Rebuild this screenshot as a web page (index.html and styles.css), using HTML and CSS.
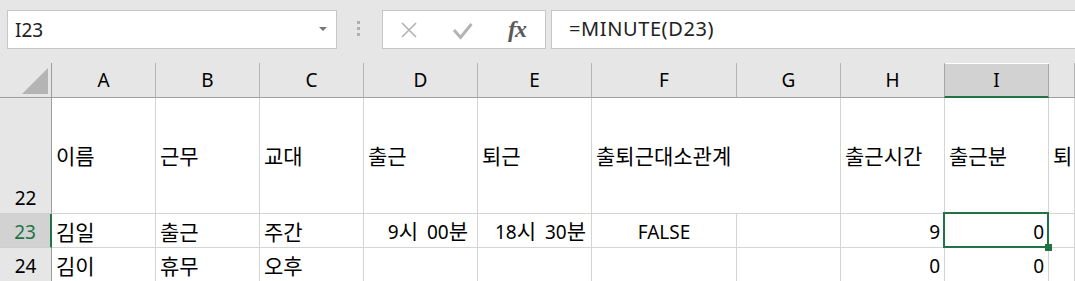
FILE: index.html
```html
<!DOCTYPE html>
<html lang="ko">
<head>
    <meta charset="UTF-8">
    <title>출퇴근 기록</title>
    <link rel="stylesheet" href="styles.css">
</head>
<body>
    <div class="toolbar">
        <div class="namebox">
            <span>I23</span>
            <span class="caret"></span>
        </div>
        <div class="grip"><i></i><i></i><i></i></div>
        <div class="fx-buttons">
            <svg class="icon-cancel" width="16" height="16" viewBox="0 0 16 16">
                <path d="M1 1 L15 15 M15 1 L1 15" stroke="#b4b4b4" stroke-width="1.7" fill="none"/>
            </svg>
            <svg class="icon-enter" width="21" height="18" viewBox="0 0 21 18">
                <polyline points="2,8 8.5,15.5 19.5,2" stroke="#b4b4b4" stroke-width="3" fill="none"/>
            </svg>
            <span class="fx">fx</span>
        </div>
        <div class="formula">=MINUTE(D23)</div>
    </div>

    <div class="sheet">
        <!-- column headers -->
        <div class="corner">
            <svg width="26" height="26" viewBox="0 0 26 26"><polygon points="26,0 26,26 0,26" fill="#b4b4b4"/></svg>
        </div>
        <div class="hd">A</div>
        <div class="hd">B</div>
        <div class="hd">C</div>
        <div class="hd">D</div>
        <div class="hd">E</div>
        <div class="hd">F</div>
        <div class="hd">G</div>
        <div class="hd">H</div>
        <div class="hd active">I</div>
        <div class="hd"></div>

        <!-- row 22 -->
        <div class="rh">22</div>
        <div class="cell title ko">이름</div>
        <div class="cell title ko">근무</div>
        <div class="cell title ko">교대</div>
        <div class="cell title ko">출근</div>
        <div class="cell title ko">퇴근</div>
        <div class="cell title ko spill">출퇴근대소관계</div>
        <div class="cell title"></div>
        <div class="cell title ko">출근시간</div>
        <div class="cell title ko">출근분</div>
        <div class="cell title ko">퇴</div>

        <!-- row 23 -->
        <div class="rh active">23</div>
        <div class="cell ko">김일</div>
        <div class="cell ko">출근</div>
        <div class="cell ko">주간</div>
        <div class="cell num time pad-d"><span>9<span class="ko">시</span> 00<span class="ko">분</span></span></div>
        <div class="cell num time"><span>18<span class="ko">시</span> 30<span class="ko">분</span></span></div>
        <div class="cell center">FALSE</div>
        <div class="cell"></div>
        <div class="cell num">9</div>
        <div class="cell num selected">0</div>
        <div class="cell"></div>

        <!-- row 24 -->
        <div class="rh">24</div>
        <div class="cell ko">김이</div>
        <div class="cell ko">휴무</div>
        <div class="cell ko">오후</div>
        <div class="cell"></div>
        <div class="cell"></div>
        <div class="cell"></div>
        <div class="cell"></div>
        <div class="cell num">0</div>
        <div class="cell num">0</div>
        <div class="cell"></div>
    </div>
</body>
</html>
```

FILE: styles.css
```css
body {
    margin: 0;
    background-color: #fff;
    overflow: hidden;
    font-family: "Noto Sans", "Noto Sans CJK KR", sans-serif;
    color: #000;
}
.toolbar {
    display: flex;
    align-items: flex-start;
    height: 63px;
    box-sizing: border-box;
    padding: 10px 0 0 7px;
    background-color: #e6e6e6;
}
.namebox {
    width: 330px;
    height: 39px;
    box-sizing: border-box;
    border: 1px solid #c6c6c6;
    background-color: #fff;
    display: flex;
    align-items: center;
    justify-content: space-between;
    padding: 0 9px 0 7px;
    font-size: 19px;
    color: #222;
}
.caret {
    border-left: 4px solid transparent;
    border-right: 4px solid transparent;
    border-top: 4px solid #777;
    margin-top: -2px;
}
.grip {
    display: flex;
    flex-direction: column;
    gap: 3px;
    margin: 11px 22px 0 20px;
}
.grip i {
    display: block;
    width: 3px;
    height: 3px;
    background-color: #b0b0b0;
}
.fx-buttons {
    width: 164px;
    height: 39px;
    box-sizing: border-box;
    border: 1px solid #c6c6c6;
    background-color: #fff;
    display: flex;
    align-items: center;
}
.icon-cancel {
    margin-left: 18px;
}
.icon-enter {
    margin-left: 35px;
    margin-top: 2px;
}
.fx {
    margin-left: 35px;
    font-family: "Liberation Serif", serif;
    font-style: italic;
    font-weight: bold;
    font-size: 24px;
    color: #5a5a5a;
    letter-spacing: -1px;
}
.formula {
    flex: 1;
    height: 39px;
    box-sizing: border-box;
    margin: 0 -2px 0 5px;
    border: 1px solid #c6c6c6;
    background-color: #fff;
    padding-left: 17px;
    font-size: 20px;
    letter-spacing: 0.6px;
    line-height: 36px;
    color: #222;
}
.sheet {
    display: grid;
    grid-template-columns: 52px 104px 104px 104px 114px 114px 145px 104px 104px 104px 1fr;
    grid-template-rows: 35px 116px 34px 34px;
    font-size: 19px;
}
.corner {
    background-color: #e6e6e6;
    border-right: 1px solid #9e9e9e;
    border-bottom: 1px solid #9e9e9e;
    display: flex;
    align-items: flex-end;
    justify-content: flex-end;
    padding: 0 3px 3px 0;
}
.corner svg {
    display: block;
}
.hd {
    background-color: #e6e6e6;
    border-right: 1px solid #b4b4b4;
    border-bottom: 1px solid #9e9e9e;
    display: flex;
    align-items: center;
    justify-content: center;
}
.hd.active {
    background-color: #d2d2d2;
    border-right-color: #a8a8a8;
    border-bottom: 2px solid #217346;
    margin-top: 1px;
    margin-left: -1px;
    border-left: 1px solid #a8a8a8;
}
.rh {
    background-color: #e6e6e6;
    border-right: 1px solid #9e9e9e;
    border-bottom: 1px solid #cfcfcf;
    display: flex;
    align-items: flex-end;
    justify-content: center;
    padding-bottom: 3px;
    line-height: 24px;
}
.rh.active {
    background-color: #d2d2d2;
    border-right: 2px solid #217346;
    color: #217346;
}
.cell {
    position: relative;
    border-right: 1px solid #d4d4d4;
    border-bottom: 1px solid #d4d4d4;
    display: flex;
    align-items: flex-end;
    padding: 0 4px 3px;
    line-height: 24px;
    white-space: nowrap;
    min-width: 0;
}
.ko {
    font-size: 21px;
}
.cell.title {
    align-items: center;
    padding-bottom: 0;
}
.cell.spill {
    border-right: none;
    z-index: 1;
}
.num {
    justify-content: flex-end;
}
.time {
    word-spacing: 4px;
    padding-right: 5px;
}
.time.pad-d {
    padding-right: 9px;
}
.center {
    justify-content: center;
}
.selected::after {
    content: "";
    position: absolute;
    left: -2px;
    top: -2px;
    right: -1px;
    bottom: -1px;
    border: 2px solid #217346;
    z-index: 2;
}
.selected::before {
    content: "";
    position: absolute;
    right: -4px;
    bottom: -4px;
    width: 7px;
    height: 7px;
    background-color: #217346;
    z-index: 3;
}
```
